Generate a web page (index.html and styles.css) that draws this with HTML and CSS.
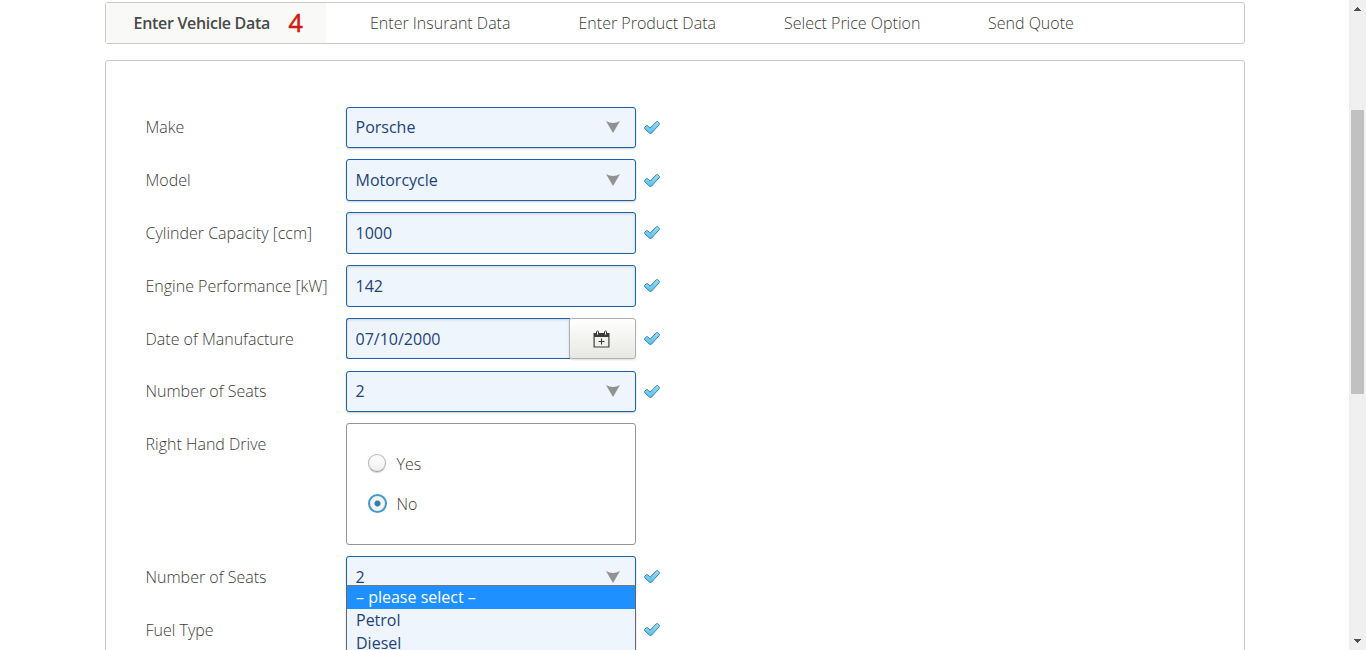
FILE: index.html
```html
<!DOCTYPE html>
<html lang="en">
<head>
<meta charset="utf-8">
<title>Enter Vehicle Data</title>
<link rel="stylesheet" href="styles.css">
</head>
<body>
<svg class="defs" aria-hidden="true">
  <defs>
    <linearGradient id="tick" x1="0" y1="0" x2="0" y2="1"><stop offset="0" stop-color="#9bdcf7"/><stop offset="1" stop-color="#5bbde8"/></linearGradient>
    <symbol id="check" viewBox="0 0 16 13"><path d="M.6 6.3 2.4 4.7 3.8 4.7 6.2 7.1 12.4.7 13.6.6 15.4 2.2 15.3 3.5 7.4 12.3 5.6 12.3.6 7.6Z" fill="url(#tick)" stroke="#3586b2" stroke-width="1" stroke-linejoin="round"/></symbol>
    <symbol id="arrow" viewBox="0 0 14 12"><path d="M0 0Q7 4 14 0L7 12Z" fill="#929292"/></symbol>
  </defs>
</svg>
<div class="page">
  <main class="content">
    <nav class="steps">
      <div class="step step-active"><span>Enter Vehicle Data</span><b class="count">4</b></div>
      <div class="step step-insurant">Enter Insurant Data</div>
      <div class="step step-product">Enter Product Data</div>
      <div class="step step-price">Select Price Option</div>
      <div class="step step-quote">Send Quote</div>
    </nav>
    <form class="panel">
      <div class="row"><label class="label">Make</label><div class="field"><span>Porsche</span><svg class="arrow"><use href="#arrow"/></svg></div><svg class="check"><use href="#check"/></svg></div>
      <div class="row"><label class="label">Model</label><div class="field"><span>Motorcycle</span><svg class="arrow"><use href="#arrow"/></svg></div><svg class="check"><use href="#check"/></svg></div>
      <div class="row"><label class="label">Cylinder Capacity [ccm]</label><div class="field input"><span>1000</span></div><svg class="check"><use href="#check"/></svg></div>
      <div class="row"><label class="label">Engine Performance [kW]</label><div class="field input"><span>142</span></div><svg class="check"><use href="#check"/></svg></div>
      <div class="row"><label class="label">Date of Manufacture</label>
        <div class="date"><div class="field input"><span>07/10/2000</span></div>
          <div class="calendar"><svg width="17" height="18" viewBox="0 0 17 18"><path d="M.5 3H16.5V17.5H.5ZM1.7 7V16.4H15.3V7Z" fill="#3d3d3d" fill-rule="evenodd"/><path d="M3.5 4.5V1.8Q3.5 1 4.5 1T5.5 1.8V4.5M11.5 4.5V1.8Q11.5 1 12.5 1T13.5 1.8V4.5" fill="#fff" stroke="#3d3d3d"/><path d="M8.5 8.5V14.5M5.5 11.5H11.5" stroke="#3d3d3d" stroke-width="1.1"/></svg></div></div>
        <svg class="check"><use href="#check"/></svg></div>
      <div class="row"><label class="label">Number of Seats</label><div class="field"><span>2</span><svg class="arrow"><use href="#arrow"/></svg></div><svg class="check"><use href="#check"/></svg></div>
      <div class="row row-radio"><label class="label">Right Hand Drive</label>
        <div class="radios">
          <div class="option"><i class="radio"></i>Yes</div>
          <div class="option"><i class="radio radio-on"></i>No</div>
        </div></div>
      <div class="row"><label class="label">Number of Seats</label>
        <div class="field"><span>2</span><svg class="arrow"><use href="#arrow"/></svg>
          <div class="menu"><div class="item item-on">– please select –</div><div class="item">Petrol</div><div class="item">Diesel</div></div></div>
        <svg class="check"><use href="#check"/></svg></div>
      <div class="row"><label class="label">Fuel Type</label><div class="field"></div><svg class="check"><use href="#check"/></svg></div>
    </form>
  </main>
  <aside class="scrollbar">
    <svg width="7" height="4" shape-rendering="crispEdges"><path d="M3 0H4V1H5V2H6V3H7V4H0V3H1V2H2V1H3Z" fill="#505050"/></svg>
    <div class="thumb"></div>
    <svg class="down" width="7" height="4" shape-rendering="crispEdges"><path d="M0 0H7V1H6V2H5V3H4V4H3V3H2V2H1V1H0Z" fill="#505050"/></svg>
  </aside>
</div>
</body>
</html>
```
FILE: styles.css
```css
* { box-sizing: border-box; }
body { margin: 0; background: #fff; color: #3c3c3b; font: 300 16px/22px "Open Sans", sans-serif; overflow: hidden; }
.defs { position: absolute; width: 0; height: 0; }
.page { display: flex; justify-content: space-between; height: 650px; overflow: hidden; }
.content { width: 1140px; margin-left: 105px; padding-top: 2px; }
.steps { display: flex; height: 42px; border: 1px solid #c9c9c9; border-radius: 3px; white-space: nowrap; }
.step { display: flex; align-items: center; }
.step-active { width: 220px; padding-left: 27.5px; background: #f9f9f7; color: #4a4a49; font-weight: 600; }
.step-active span { width: 137px; letter-spacing: -.3px; }
.count { margin: 0 0 2px 18px; color: #cf1b13; font-size: 25px; font-weight: 400; -webkit-text-stroke: .6px #cf1b13; }
.step-insurant { width: 252px; padding-left: 44px; }
.step-product { width: 206px; padding-left: .5px; }
.step-price { width: 204px; }
.panel { display: flex; flex-direction: column; gap: 11.2px; height: 640px; margin-top: 16px; padding: 45.6px 40px 0; border: 1px solid #c9c9c9; border-radius: 3px; }
.row { display: flex; flex: none; height: 41.6px; }
.label { width: 200px; padding-top: 9.8px; text-indent: -.5px; white-space: nowrap; }
.field { position: relative; display: flex; justify-content: space-between; width: 290px; padding: 8.8px 15px 0 8.5px; border: 1px solid #1b62ab; border-radius: 3px; background: #eef5fd; color: #1f4378; font-weight: 400; box-shadow: 0 1px 2px #0003; }
.input { box-shadow: inset 0 1px 3px #0002; }
.arrow { width: 14px; height: 12px; margin-top: 5px; }
.check { width: 16px; height: 13px; margin: 14.3px 0 0 8px; }
.date { display: flex; width: 290px; }
.date .field { width: 224px; border-right: 0; border-radius: 3px 0 0 3px; }
.calendar { display: flex; align-items: center; justify-content: center; width: 67px; margin-left: -1px; z-index: 1; border: 1px solid #b1b1b0; border-radius: 3px; background: linear-gradient(#fff, #e7e7e3); box-shadow: 0 1px 2px #0002; }
.calendar svg { margin-right: 3px; }
.row-radio { height: 121.6px; }
.radios { display: flex; flex-direction: column; gap: 18px; width: 290px; padding: 29px 20px; border: 1px solid #969696; border-radius: 3px; }
.option { display: flex; align-items: center; gap: 9.5px; }
.radio { width: 18px; height: 18px; margin: 0 1px 2px; border: 1px solid #b5b5b5; border-bottom-color: #999; border-radius: 50%; background: linear-gradient(#fff, #eee); box-shadow: 0 1px 1px #0003; }
.radio-on { width: 19px; height: 19px; margin: 0 .5px 2px; border: 1.5px solid #449bc8; border-width: 2px; background: radial-gradient(circle, #347fa9 2.5px, #f3f3f3 3.5px); box-shadow: none; }
.menu { position: absolute; z-index: 2; left: -1px; top: 28px; width: 290px; height: 80px; border: 1px solid #666; border-top-color: #777; background: #eef5fd; }
.item { height: 23px; padding-left: 9px; line-height: 23px; }
.item-on { background: #1e90ff; color: #fff; }
.scrollbar { display: flex; flex-direction: column; align-items: center; width: 17px; padding: 7px 0; background: #f0f0f0; }
.thumb { width: 13px; height: 284px; margin-top: 99px; background: #c1c1c1; }
.down { margin-top: auto; }
```
